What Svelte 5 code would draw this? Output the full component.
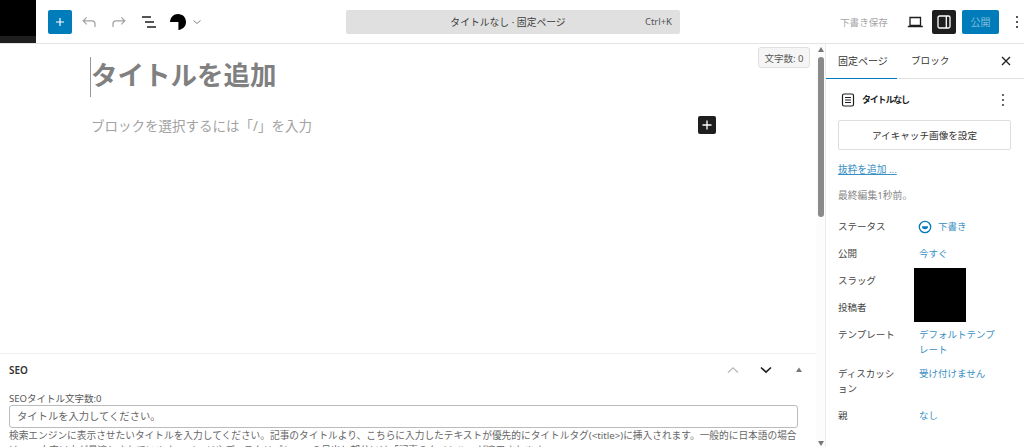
<script>
const rows = [
	{ label: "公開", value: "今すぐ" },
	{ label: "スラッグ", value: "" },
	{ label: "投稿者", value: "" },
	{ label: "テンプレート", value: "デフォルトテンプレート", tight: true },
	{ label: "ディスカッション", value: "受け付けません" },
	{ label: "親", value: "なし" }
];
</script>

<div class="screen">
	<header class="topbar">
		<div class="site-logo"></div>
		<div class="tools">
			<button class="add" aria-label="追加">
				<svg width="14" height="14" viewBox="0 0 14 14"><path d="M7 3v8M3 7h8" stroke="#fff" stroke-width="1.200" /></svg>
			</button>
			<svg class="undo" width="24" height="24" viewBox="0 0 24 24"><path d="M18 17v-3.200c0-1.700-1.300-3-3-3H6.500M9.700 7.300 6.200 10.800l3.500 3.500" fill="none" stroke="#a0a0a0" stroke-width="1.200" /></svg>
			<svg class="redo" width="24" height="24" viewBox="0 0 24 24"><path d="M6 17v-3.200c0-1.700 1.300-3 3-3h8.500M14.300 7.300l3.500 3.500-3.500 3.500" fill="none" stroke="#a0a0a0" stroke-width="1.200" /></svg>
			<svg class="list" width="24" height="24" viewBox="0 0 24 24"><path d="M5 7h9M8 12h9M10 17h9" fill="none" stroke="#1e1e1e" stroke-width="1.300" /></svg>
			<svg class="logo" width="16" height="16" viewBox="2 2 16 16"><path d="M10 10H2C2.400 5.200 5.600 2 10 2c4.800 0 8 3.600 8 8s-3 7.400-7.600 8V10z" fill="#000" /></svg>
			<svg class="chev" width="12" height="12" viewBox="0 0 12 12"><path d="M2.500 4.500 6 7.500l3.500-3" fill="none" stroke="#777" stroke-width="0.900" /></svg>
		</div>
		<div class="center">
			<div class="command">
				<span>タイトルなし · 固定ページ</span>
				<span class="kbd">Ctrl+K</span>
			</div>
		</div>
		<div class="actions">
			<span class="save">下書き保存</span>
			<svg class="laptop" width="24" height="24" viewBox="0 0 24 24"><path d="M7 7.500h10.500v8H7zM4.800 16.500h15" fill="none" stroke="#1e1e1e" stroke-width="1.300" /></svg>
			<button class="side-toggle" aria-label="設定">
				<svg width="18" height="18" viewBox="0 0 18 18"><rect x="3" y="3" width="12" height="12" rx="1.500" fill="none" stroke="#fff" stroke-width="1.300" /><path d="M11.300 3v12" stroke="#fff" stroke-width="1.300" /></svg>
			</button>
			<button class="publish">公開</button>
			<svg class="more" width="20" height="24" viewBox="0 0 20 24"><circle cx="10" cy="7" r="1" /><circle cx="10" cy="12" r="1" /><circle cx="10" cy="17" r="1" /></svg>
		</div>
	</header>

	<div class="body">
		<main class="editor">
			<div class="canvas">
				<span class="count">文字数: 0</span>
				<h1 class="title">タイトルを追加</h1>
				<div class="para">
					<span>ブロックを選択するには「/」を入力</span>
					<button class="inline-add" aria-label="ブロックを追加">
						<svg width="14" height="14" viewBox="0 0 14 14"><path d="M7 2.500v9M2.500 7h9" stroke="#fff" stroke-width="1.300" /></svg>
					</button>
				</div>
			</div>
			<section class="seo">
				<div class="seo-head">
					<span class="seo-name">SEO</span>
					<svg class="up" width="16" height="16" viewBox="0 0 16 16"><path d="M3 10.500 8 5.800l5 4.700" fill="none" stroke="#b8b8b8" stroke-width="1.300" /></svg>
					<svg class="down" width="16" height="16" viewBox="0 0 16 16"><path d="M3 5.500 8 10.200l5-4.700" fill="none" stroke="#1e1e1e" stroke-width="1.600" /></svg>
					<svg class="tri" width="8" height="8" viewBox="0 0 8 8"><path d="M4 1.500 7 6H1z" fill="#777" /></svg>
				</div>
				<div class="seo-body">
					<div class="seo-label">SEOタイトル文字数:0</div>
					<div class="seo-input">タイトルを入力してください。</div>
					<p class="seo-help">検索エンジンに表示させたいタイトルを入力してください。記事のタイトルより、こちらに入力したテキストが優先的にタイトルタグ(&lt;title&gt;)に挿入されます。一般的に日本語の場合は、32文字以内が最適とされています。(ページやディスクリプションの見出し部分には「記事のタイトル」が適用されます)</p>
				</div>
			</section>
		</main>

		<div class="scroll">
			<div class="arrow top"></div>
			<div class="thumb"></div>
			<div class="arrow bottom"></div>
		</div>

		<aside class="sidebar">
			<div class="tabs">
				<span class="tab active">固定ページ</span>
				<span class="tab">ブロック</span>
				<svg class="close" width="16" height="16" viewBox="0 0 16 16"><path d="M4 4l8 8M12 4l-8 8" stroke="#1e1e1e" stroke-width="1.300" /></svg>
			</div>
			<div class="panel">
				<div class="doc">
					<svg width="16" height="18" viewBox="0 0 16 18"><rect x="2.500" y="3" width="11" height="12" rx="1.500" fill="none" stroke="#1e1e1e" stroke-width="1.200" /><path d="M5 6.500h6M5 9h6M5 11.500h6" stroke="#1e1e1e" stroke-width="1.100" /></svg>
					<strong>タイトルなし</strong>
					<svg class="doc-more" width="6" height="16" viewBox="0 0 6 16"><circle cx="3" cy="3" r="0.900" /><circle cx="3" cy="8" r="0.900" /><circle cx="3" cy="13" r="0.900" /></svg>
				</div>
				<button class="featured">アイキャッチ画像を設定</button>
				<span class="excerpt">抜粋を追加 ...</span>
				<div class="edited">最終編集1秒前。</div>
				<dl class="meta">
					<dt>ステータス</dt>
					<dd class="status">
						<svg width="14" height="14" viewBox="0 0 16 16"><circle cx="8" cy="8" r="6.500" fill="none" stroke="#007cba" stroke-width="1.500" /><path d="M4.500 7h7a3.500 3.500 0 0 1-7 0z" fill="#007cba" /></svg>
						下書き
					</dd>
					{#each rows as row}
						<dt class:tight={row.tight}>{row.label}</dt>
						<dd class:tight={row.tight}>{row.value}</dd>
					{/each}
				</dl>
				<div class="mask"></div>
			</div>
		</aside>
	</div>
</div>

<style>
:global(body) {
	margin: 0;
	background: #fff;
}
.screen {
	width: 1024px;
	height: 447px;
	overflow: hidden;
	display: flex;
	flex-direction: column;
	font-family: "Noto Sans", "Noto Sans CJK JP", sans-serif;
	color: #1e1e1e;
}
button {
	border: 0;
	padding: 0;
	font-family: inherit;
	flex: none;
}
svg {
	display: block;
	flex: none;
}
.topbar {
	height: 43px;
	flex: none;
	display: flex;
	align-items: center;
	border-bottom: 1px solid #e4e4e4;
}
.site-logo {
	width: 36px;
	height: 43px;
	flex: none;
	background: #000;
	box-sizing: border-box;
	border-bottom: 7px solid #1e1e1e;
}
.tools {
	width: 310px;
	flex: none;
	display: flex;
	align-items: center;
	padding-left: 12px;
	box-sizing: border-box;
}
.add {
	width: 24px;
	height: 24px;
	background: #007cba;
	border-radius: 2px;
	display: flex;
	align-items: center;
	justify-content: center;
}
.undo { margin-left: 5px; }
.redo { margin-left: 6px; }
.list { margin-left: 6px; }
.logo { margin-left: 9px; }
.chev { margin-left: 5px; }
.center {
	width: 334px;
	flex: none;
}
.command {
	height: 24px;
	background: #e0e0e0;
	border-radius: 2px;
	box-sizing: border-box;
	padding-right: 10px;
	display: flex;
	align-items: center;
	justify-content: center;
	position: relative;
	font-size: 9.800px;
	color: #3d3d3d;
}
.kbd {
	position: absolute;
	right: 8px;
	font-size: 9.500px;
	color: #555;
}
.actions {
	flex: 1;
	min-width: 0;
	display: flex;
	align-items: center;
	padding-left: 160px;
}
.save {
	flex: none;
	font-size: 9.600px;
	color: #a5a5a5;
	white-space: nowrap;
}
.laptop { margin-left: 15px; }
.side-toggle {
	width: 24px;
	height: 24px;
	margin-left: 5px;
	background: #1e1e1e;
	border-radius: 2px;
	display: flex;
	align-items: center;
	justify-content: center;
}
.publish {
	width: 37px;
	height: 24px;
	margin-left: 6px;
	background: #007cba;
	border-radius: 2px;
	color: #7fbcdc;
	font-size: 10px;
}
.more { margin-left: 8px; fill: #1e1e1e; }

.body {
	flex: 1;
	min-height: 0;
	display: flex;
}
.editor {
	width: 816px;
	flex: none;
	display: flex;
	flex-direction: column;
	min-height: 0;
}
.canvas {
	flex: 1;
	position: relative;
	min-height: 0;
	padding: 16px 0 0 91px;
	box-sizing: border-box;
}
.count {
	position: absolute;
	top: 3px;
	right: 6px;
	height: 21px;
	width: 52px;
	box-sizing: border-box;
	border: 1px solid #e0e0e0;
	border-radius: 3px;
	background: #f5f5f5;
	display: flex;
	align-items: center;
	justify-content: center;
	font-size: 9.500px;
	color: #555;
}
.title {
	margin: 0;
	height: 30px;
	line-height: 30px;
	font-size: 26.500px;
	font-weight: 700;
	color: #808080;
	position: relative;
}
.title::before {
	content: "";
	position: absolute;
	left: -1px;
	top: -3px;
	width: 1px;
	height: 40px;
	background: #999;
}
.para {
	margin-top: 23px;
	height: 24px;
	width: 625px;
	display: flex;
	align-items: center;
	justify-content: space-between;
	font-size: 13.500px;
	color: #a2a2a2;
}
.inline-add {
	width: 18px;
	height: 18px;
	background: #1e1e1e;
	border-radius: 2px;
	display: flex;
	align-items: center;
	justify-content: center;
}
.seo {
	height: 94px;
	flex: none;
	border-top: 1px solid #eee;
	box-sizing: border-box;
	overflow: hidden;
}
.seo-head {
	height: 32px;
	display: flex;
	align-items: center;
	padding: 0 13px 0 9px;
}
.seo-name {
	flex: 1;
	font-size: 10px;
	font-weight: 600;
	color: #333;
}
.down { margin-left: 17px; }
.tri { margin-left: 21px; }
.seo-body {
	padding: 0 18px 0 9px;
}
.seo-label {
	margin-top: 6px;
	font-size: 9.500px;
	line-height: 14px;
	color: #555;
}
.seo-input {
	height: 23px;
	margin-top: -1px;
	box-sizing: border-box;
	border: 1px solid #bbb;
	border-radius: 3px;
	padding-left: 7px;
	font-size: 10.300px;
	line-height: 21px;
	color: #666;
}
.seo-help {
	margin: 0;
	font-size: 9.700px;
	line-height: 15px;
	color: #666;
}
.scroll {
	width: 9px;
	flex: none;
	position: relative;
	background: #fcfcfc;
	display: flex;
	flex-direction: column;
	align-items: flex-start;
	padding-left: 2px;
	box-sizing: border-box;
}
.thumb {
	width: 6px;
	height: 160px;
	margin-top: 5px;
	border-radius: 3px;
	background: #8a8a8a;
}
.arrow {
	width: 0;
	height: 0;
	border-left: 3px solid transparent;
	border-right: 3px solid transparent;
}
.arrow.top {
	margin-top: 3px;
	border-bottom: 5px solid #777;
}
.arrow.bottom {
	margin-top: auto;
	margin-bottom: 1px;
	border-top: 5px solid #777;
}
.sidebar {
	flex: 1;
	min-width: 0;
	border-left: 1px solid #ececec;
	display: flex;
	flex-direction: column;
}
.tabs {
	height: 35px;
	flex: none;
	box-sizing: border-box;
	display: flex;
	align-items: center;
	border-bottom: 1px solid #e0e0e0;
	font-size: 10px;
	color: #333;
}
.tab {
	width: 71px;
	height: 35px;
	line-height: 34px;
	box-sizing: border-box;
	padding-left: 12px;
	white-space: nowrap;
}
.tab.active {
	border-bottom: 1px solid #007cba;
}
.tab + .tab {
	padding-left: 14px;
	font-size: 9.600px;
}
.close { margin-left: auto; margin-right: 10px; }
.panel {
	flex: 1;
	min-height: 0;
	position: relative;
	padding: 0 12px;
}
.doc {
	height: 41px;
	display: flex;
	align-items: center;
	gap: 6px;
	font-size: 9px;
	letter-spacing: -1.200px;
	padding-left: 2px;
}
.doc-more {
	margin-left: auto;
	margin-right: 6px;
	fill: #1e1e1e;
}
.featured {
	display: block;
	width: 173px;
	height: 30px;
	background: #fff;
	border: 1px solid #ddd;
	border-radius: 2px;
	font-size: 9.600px;
	color: #333;
}
.excerpt {
	display: block;
	margin-top: 12px;
	font-size: 9.700px;
	line-height: 16px;
	color: #3a8fc4;
	text-decoration: underline;
}
.edited {
	margin-top: 10px;
	font-size: 9.800px;
	line-height: 16px;
	color: #888;
}
.meta {
	margin: 9px 0 0;
	display: grid;
	grid-template-columns: 81px 1fr;
	font-size: 9.500px;
	line-height: 15px;
}
.meta dt {
	padding: 6px 16px 6px 0;
	color: #444;
}
.meta dd {
	margin: 0;
	padding: 6px 12px 6px 0;
	color: #3a8fc4;
}
.meta .tight {
	padding-bottom: 3px;
}
.meta dd.status {
	display: flex;
	align-items: center;
	gap: 6px;
	margin-left: -1px;
}
.mask {
	position: absolute;
	left: 88px;
	top: 189px;
	width: 52px;
	height: 54px;
	background: #000;
}
</style>
